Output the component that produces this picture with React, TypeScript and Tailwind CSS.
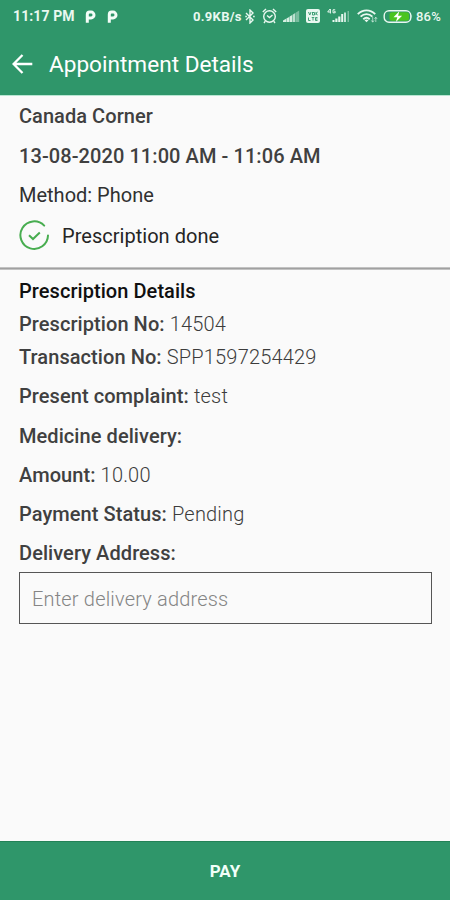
import React from "react";

function ParkIcon() {
  return (
    <svg width="11" height="13" viewBox="0 0 11 13" fill="none" stroke="#f4fdf8" strokeWidth="3">
      <path d="M2.3 12.8V4.5Q2.3 2.1 4.7 2.1h1.4a2.9 2.9 0 0 1 0 5.8H2.3" />
    </svg>
  );
}

function StatusBar() {
  return (
    <div className="flex h-8 shrink-0 items-center pl-[13px] text-[#e9f8f0]">
      <span className="w-[62px] whitespace-nowrap text-[14px] font-bold tracking-[0.1px]">11:17 PM</span>
      <span className="ml-[9.5px] flex gap-[11px]">
        <ParkIcon />
        <ParkIcon />
      </span>
      <span className="ml-[75.5px] w-[51px] whitespace-nowrap text-[13px] font-bold tracking-[0.3px]">0.9KB/s</span>
      <svg className="ml-px" width="10" height="15" viewBox="0 0 10 15" fill="none" stroke="currentColor" strokeWidth="1.4">
        <path d="M1 4l7 7-3 3V1l3 3-7 7" />
        <path d="M.3 7.5h1.6M8.1 7.5h1.6" />
      </svg>
      <svg className="ml-[7px]" width="15" height="16" viewBox="0 0 15 16" fill="none" stroke="currentColor" strokeWidth="1.4">
        <circle cx="7.5" cy="8.5" r="5.8" />
        <path d="M.8 4L4 1M14.2 4L11 1M3.3 13.2L2 15M11.7 13.2L13 15M5 7.5l2.5 2L10.5 7" />
      </svg>
      <svg className="ml-[6px]" width="17" height="12" viewBox="0 0 17 12" fill="currentColor">
        <path d="M0 12v-1.5l3-1.7V12zM3.4 12V8.6l2.8-1.7V12zM6.6 12V6.6l2.6-1.6V12z" opacity=".9" />
        <path d="M9.6 12V4.8L12.2 3v9z" opacity=".75" />
        <path d="M12.6 12V2.8L16.2.5V12z" opacity=".4" />
      </svg>
      <svg className="ml-[6px]" width="14" height="14" viewBox="0 0 14 14">
        <rect width="14" height="14" rx="2" fill="currentColor" />
        <path d="M2.5 3l1.3 3L5 3M6.5 3v3h2V3.5h-2M10 3v3M10 4.5l1.7-1.5M10 4.5L11.7 6M2.5 8.5v3h2M7 8.5v3M5.7 8.5h2.6M9.5 8.5h2M9.5 10h2M9.5 11.5h2M9.5 8.5v3" fill="none" stroke="#2f966a" strokeWidth=".9" />
      </svg>
      <svg className="ml-[7px]" width="23" height="16" viewBox="0 0 23 16" fill="currentColor">
        <path d="M3 1L.7 4H4M3.4 1v4.5M8.2 1.8H6v3h2.2V3.4h-1" fill="none" stroke="currentColor" strokeWidth="1" />
        <path d="M5.5 12h2v2h-2zM8.3 10.5h2.2V14H8.3zM11.2 8.5h2.2V14h-2.2zM14.2 6h2V14h-2z" />
        <path d="M17 4.5h2V14h-2z" opacity=".8" />
        <path d="M20.5 3h1.5V14h-1.5z" opacity=".4" />
      </svg>
      <svg className="ml-[7px]" width="21" height="14" viewBox="0 0 21 14" fill="none" stroke="currentColor" strokeWidth="1.9">
        <path d="M.8 5.2c5-5.1 12.4-5.1 17.4 0M3.6 7.7c3.5-3.5 8.3-3.5 11.8 0M6.3 10.2c2-1.9 4.4-1.9 6.4 0" />
        <path d="M9.5 13.3l-2-2q2-1.5 4 0z" fill="currentColor" stroke="none" />
        <path d="M15.7 8v5M14.3 11.4l1.4 1.8 1.4-1.8M18.8 13V8.3M17.5 9.9l1.3-1.7 1.3 1.7" strokeWidth=".9" opacity=".7" />
      </svg>
      <svg className="ml-[5px]" width="30" height="13" viewBox="0 0 30 13">
        <rect x="1.2" y=".8" width="26.6" height="11.4" rx="4.8" fill="none" stroke="currentColor" strokeWidth="1.4" />
        <path d="M28.6 4.3q1.3 2.2 0 4.4z" fill="currentColor" />
        <rect x="6.5" y="2.2" width="19.5" height="8.6" rx="2.5" fill="#4bc420" />
        <path d="M16.3 1.2L10.5 7.2h3.8l-1.4 4.7 6.2-6.2h-4z" fill="#fff" />
      </svg>
      <span className="ml-[3px] whitespace-nowrap text-[13px] font-medium tracking-[0.2px]">86%</span>
    </div>
  );
}

function Field({ label, value, height }: { label: string; value?: string; height: string }) {
  return (
    <div className={`flex items-center whitespace-pre text-[#3c3c3c] ${height}`}>
      <span className="font-medium tracking-[0.07px] text-[#404040]">{label}</span>
      {value ? <span className="font-light tracking-[0.18px]"> {value}</span> : null}
    </div>
  );
}

export default function App() {
  return (
    <div className="flex h-[900px] w-[450px] flex-col overflow-hidden bg-[#fafafa] font-['Roboto',sans-serif] text-[20px] leading-none">
      <header className="flex h-24 shrink-0 flex-col border-b border-[#b9e6d3] bg-[#2f966a]">
        <StatusBar />
        <div className="flex h-[63px] items-center text-white">
          <svg className="ml-3" width="21" height="20" viewBox="0 0 21 20" fill="none" stroke="currentColor" strokeWidth="2.3">
            <path d="M20.3 10H1.8M10.5 1L1.6 10l8.9 9" />
          </svg>
          <h1 className="ml-4 whitespace-nowrap pt-[3px] text-[22.6px] font-normal">Appointment Details</h1>
        </div>
      </header>
      <section className="flex h-[171px] shrink-0 flex-col pl-[19px] text-[#404040]">
        <div className="flex h-10 items-center font-medium tracking-[0.05px]">Canada Corner</div>
        <div className="flex h-[39px] items-center whitespace-nowrap font-medium tracking-[0.08px]">13-08-2020 11:00 AM - 11:06 AM</div>
        <div className="flex h-10 items-center text-[#303030]">Method: Phone</div>
        <div className="flex h-[41px] items-center text-[#252525]">
          <svg width="31" height="31" viewBox="0 0 31 31" fill="none" stroke="#48ad50" strokeWidth="2">
            <path d="M25.2 5.6A13.8 13.8 0 1 0 29 15.5" strokeLinecap="round" />
            <path d="M10 15.2l4 3.8 6.8-6.5" />
          </svg>
          <span className="ml-3 tracking-[0.03px]">Prescription done</span>
        </div>
      </section>
      <div className="h-[3px] shrink-0 border-y border-[#c2c2c2] bg-[#a0a0a0]" />
      <main className="flex grow flex-col pl-[19px] pr-[18px] pt-1">
        <h2 className="flex h-[33px] items-center font-medium tracking-[0.06px] text-[#101010]">Prescription Details</h2>
        <Field label="Prescription No:" value="14504" height="h-[33px]" />
        <Field label="Transaction No:" value="SPP1597254429" height="h-[33px]" />
        <div className="h-[3px]" />
        <Field label="Present complaint:" value="test" height="h-10" />
        <Field label="Medicine delivery:" height="h-[39px]" />
        <Field label="Amount:" value="10.00" height="h-10" />
        <Field label="Payment Status:" value="Pending" height="h-[38px]" />
        <Field label="Delivery Address:" height="h-[39px]" />
        <input
          className="h-[52px] w-full border border-[#555555] bg-transparent px-3 pt-0.5 font-light tracking-[0.18px] outline-none placeholder:text-[#858585]"
          placeholder="Enter delivery address"
        />
      </main>
      <button className="h-[59px] shrink-0 border-t border-[#238257] bg-[#2f966a] text-[17px] font-bold text-[#f2fff9]">PAY</button>
    </div>
  );
}
